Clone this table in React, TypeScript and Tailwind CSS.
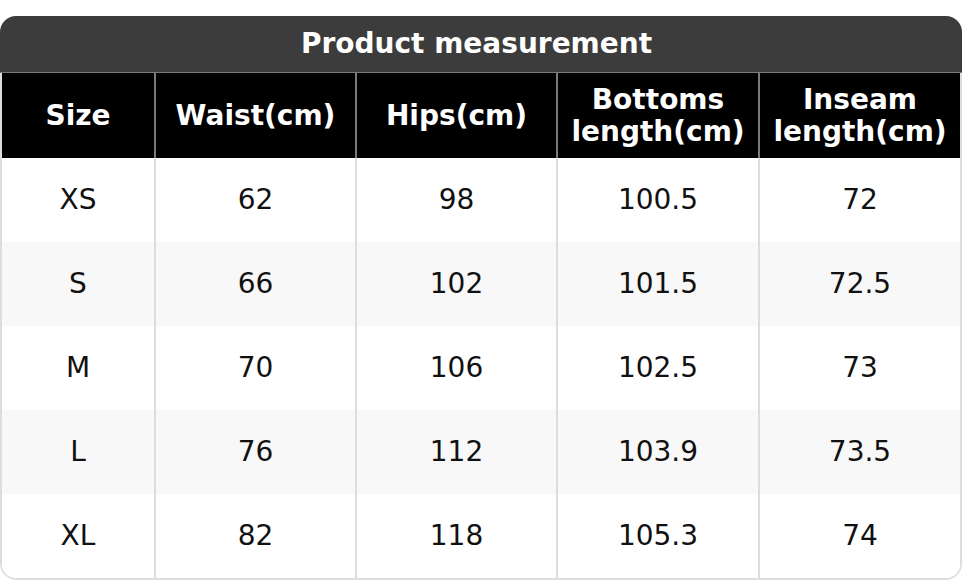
const columns = ["Size", "Waist(cm)", "Hips(cm)", "Bottoms length(cm)", "Inseam length(cm)"];

const rows = [
  ["XS", "62", "98", "100.5", "72"],
  ["S", "66", "102", "101.5", "72.5"],
  ["M", "70", "106", "102.5", "73"],
  ["L", "76", "112", "103.9", "73.5"],
  ["XL", "82", "118", "105.3", "74"],
];

const grid = "grid grid-cols-[154px_201px_201px_202px_1fr]";

export default function App() {
  return (
    <div className="w-[962px] h-[580px] bg-white pt-4 font-['DejaVu_Sans',sans-serif]">
      <div className="rounded-2xl overflow-hidden">
        {/* title */}
        <div className="h-[57px] bg-[#3c3c3c] flex items-center justify-center pr-[9px] text-white font-bold text-[28px] border-b border-[#7a7a7a]">
          Product measurement
        </div>

        <div className="border-x-2 border-b-2 border-[#dddddd] rounded-b-2xl overflow-hidden">
          {/* header */}
          <div className={`${grid} h-[85px] bg-black`}>
            {columns.map((c, i) => (
              <div
                key={c}
                className={`flex items-center justify-center text-center text-white font-bold text-[28px] leading-[32px] px-1 ${
                  i < columns.length - 1 ? "border-r-2 border-[#7a7a7a]" : ""
                }`}
              >
                {c}
              </div>
            ))}
          </div>

          {/* body */}
          {rows.map((r, ri) => (
            <div key={r[0]} className={`${grid} h-[84px] ${ri % 2 === 1 ? "bg-[#f8f8f8]" : "bg-white"}`}>
              {r.map((v, i) => (
                <div
                  key={i}
                  className={`flex items-center justify-center text-[28px] text-[#111111] ${
                    i < r.length - 1 ? "border-r-2 border-[#dddddd]" : ""
                  }`}
                >
                  {v}
                </div>
              ))}
            </div>
          ))}
        </div>
      </div>
    </div>
  );
}
